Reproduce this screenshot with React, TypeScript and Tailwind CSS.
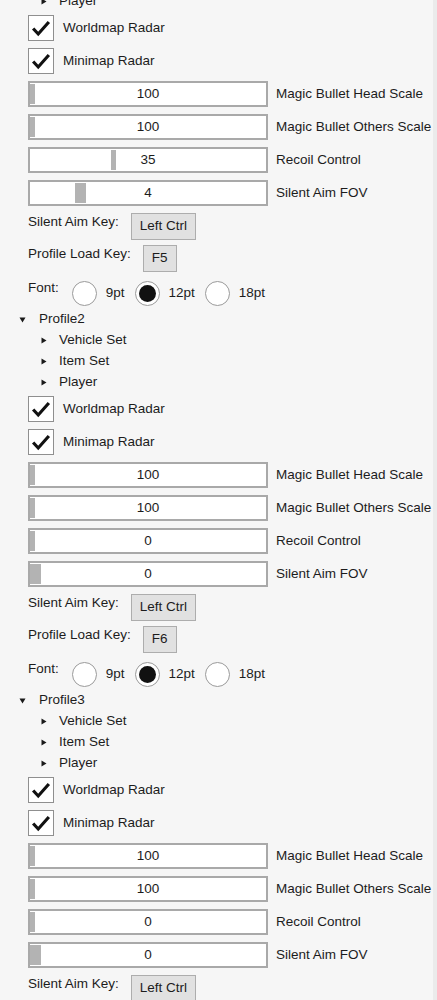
import React from "react"

type Slider = { value: string; label: string; thumbLeft: number; thumbWidth: number }

type Profile = {
  name: string
  loadKey: string
  partial?: boolean
  cutOff?: boolean
  sliders: Slider[]
}

const profiles: Profile[] = [
  {
    name: "Profile1",
    loadKey: "F5",
    partial: true,
    sliders: [
      { value: "100", label: "Magic Bullet Head Scale", thumbLeft: 0, thumbWidth: 5 },
      { value: "100", label: "Magic Bullet Others Scale", thumbLeft: 0, thumbWidth: 5 },
      { value: "35", label: "Recoil Control", thumbLeft: 81, thumbWidth: 5 },
      { value: "4", label: "Silent Aim FOV", thumbLeft: 45, thumbWidth: 11 },
    ],
  },
  {
    name: "Profile2",
    loadKey: "F6",
    sliders: [
      { value: "100", label: "Magic Bullet Head Scale", thumbLeft: 0, thumbWidth: 5 },
      { value: "100", label: "Magic Bullet Others Scale", thumbLeft: 0, thumbWidth: 5 },
      { value: "0", label: "Recoil Control", thumbLeft: 0, thumbWidth: 5 },
      { value: "0", label: "Silent Aim FOV", thumbLeft: 0, thumbWidth: 11 },
    ],
  },
  {
    name: "Profile3",
    loadKey: "F7",
    cutOff: true,
    sliders: [
      { value: "100", label: "Magic Bullet Head Scale", thumbLeft: 0, thumbWidth: 5 },
      { value: "100", label: "Magic Bullet Others Scale", thumbLeft: 0, thumbWidth: 5 },
      { value: "0", label: "Recoil Control", thumbLeft: 0, thumbWidth: 5 },
      { value: "0", label: "Silent Aim FOV", thumbLeft: 0, thumbWidth: 11 },
    ],
  },
]

function TriDown() {
  return (
    <svg width="7" height="6" viewBox="0 0 7 6">
      <path d="M0.5 0.5 L6.5 0.5 L3.5 5.5 Z" fill="#1a1a1a" />
    </svg>
  )
}

function TriRight() {
  return (
    <svg width="6" height="7" viewBox="0 0 6 7">
      <path d="M0.5 0.5 L5.5 3.5 L0.5 6.5 Z" fill="#1a1a1a" />
    </svg>
  )
}

function Checkbox({ label }: { label: string }) {
  return (
    <div className="flex items-center h-[26px] pl-[28px]">
      <div className="w-[26px] h-[26px] bg-white border border-[#8f8f8f] flex items-center justify-center">
        <svg width="26" height="26" viewBox="0 0 26 26">
          <path d="M4.5 13.5 L10 19.5 L21.5 6.5" fill="none" stroke="#111" strokeWidth="3.4" strokeLinejoin="miter" />
        </svg>
      </div>
      <span className="ml-[9px]">{label}</span>
    </div>
  )
}

function SliderRow({ s }: { s: Slider }) {
  return (
    <div className="flex items-center h-[26px] pl-[28px]">
      <div className="relative w-[240px] h-[26px] bg-white border-2 border-[#a9a9a9] flex items-center justify-center">
        <div
          className="absolute top-[1px] bottom-[1px] bg-[#b3b3b3]"
          style={{ left: s.thumbLeft, width: s.thumbWidth }}
        />
        <span className="relative">{s.value}</span>
      </div>
      <span className="ml-[8px] whitespace-nowrap">{s.label}</span>
    </div>
  )
}

function KeyButton({ children }: { children: React.ReactNode }) {
  return (
    <div className="h-[27px] px-[8px] bg-[#e1e1e1] border border-[#adadad] flex items-center justify-center">
      {children}
    </div>
  )
}

function Radio({ checked, label }: { checked?: boolean; label: string }) {
  return (
    <div className="flex items-center">
      <div className="w-[25px] h-[25px] rounded-full bg-white border border-[#9a9a9a] flex items-center justify-center">
        {checked && <div className="w-[17px] h-[17px] rounded-full bg-[#111]" />}
      </div>
      <span className="ml-[9px]">{label}</span>
    </div>
  )
}

function ProfileBlock({ p }: { p: Profile }) {
  // first block is scrolled past its top, only "Player" peeks in
  const items = p.partial ? ["Player"] : ["Vehicle Set", "Item Set", "Player"]
  return (
    <div className={`flex flex-col pb-[3px] ${p.partial ? "-mt-[9px]" : ""}`}>
      {!p.partial && (
        <div className="flex items-center h-[21px] pl-[19px]">
          <TriDown />
          <span className="ml-[13px]">{p.name}</span>
        </div>
      )}
      {items.map((t) => (
        <div key={t} className="flex items-center h-[21px] pl-[41px]">
          <TriRight />
          <span className="ml-[12px]">{t}</span>
        </div>
      ))}
      <div className="flex flex-col gap-[7px] mt-[3px]">
        <Checkbox label="Worldmap Radar" />
        <Checkbox label="Minimap Radar" />
        {p.sliders.map((s, i) => (
          <SliderRow key={i} s={s} />
        ))}
        <div className="flex items-start pl-[28px]">
          <span className="mt-[1px] leading-[16px]">Silent Aim Key:</span>
          <div className="ml-[12px]">
            <KeyButton>Left Ctrl</KeyButton>
          </div>
        </div>
      </div>
      {!p.cutOff && (
        <>
          <div className="flex items-start pl-[28px] mt-[5px]">
            <span className="mt-[1px] leading-[16px]">Profile Load Key:</span>
            <div className="ml-[12px]">
              <KeyButton>{p.loadKey}</KeyButton>
            </div>
          </div>
          <div className="flex items-start pl-[28px] mt-[9px]">
            <span className="-mt-[1px] leading-[16px]">Font:</span>
            <div className="flex items-center ml-[13px] gap-[10px]">
              <Radio label="9pt" />
              <Radio checked label="12pt" />
              <Radio label="18pt" />
            </div>
          </div>
        </>
      )}
    </div>
  )
}

export default function App() {
  return (
    <div
      className="relative w-[437px] h-[1000px] overflow-hidden bg-[#f6f6f6] text-[13.5px] text-[#1c1c1c]"
      style={{ fontFamily: '"Liberation Sans", Arial, sans-serif' }}
    >
      <div className="absolute top-0 right-0 bottom-0 w-[4px] bg-[#ebebeb]" />
      <div className="flex flex-col">
        {profiles.map((p) => (
          <ProfileBlock key={p.name} p={p} />
        ))}
      </div>
    </div>
  )
}
